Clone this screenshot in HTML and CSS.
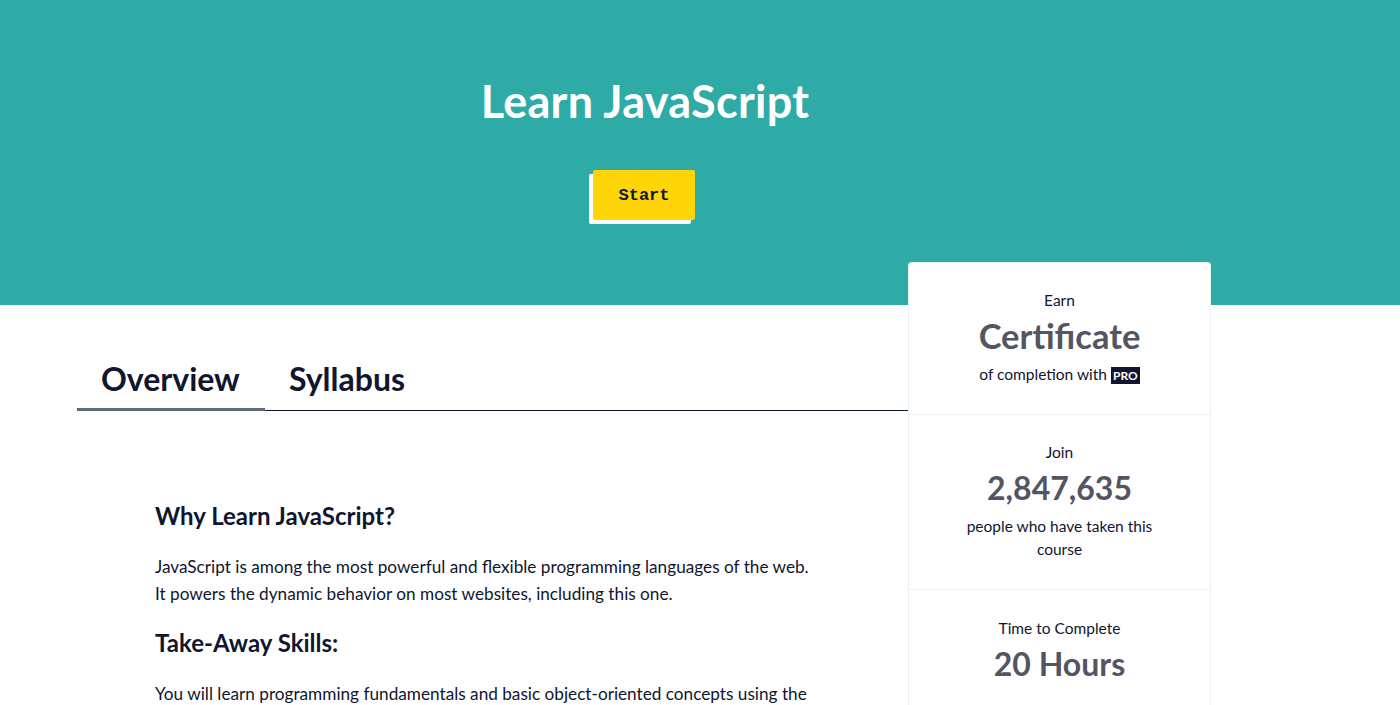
FILE: index.html
```html
<!DOCTYPE html>
<html>
<head>
<meta charset="utf-8">
<link rel="stylesheet" href="styles.css">
</head>
<body>
<header class="hero">
  <h1 class="hero-title">Learn JavaScript</h1>
  <button class="start-btn">Start</button>
</header>
<div class="page">
  <main class="main">
    <nav class="tabs">
      <div class="tab active">Overview</div>
      <div class="tab">Syllabus</div>
    </nav>
    <section class="content">
      <h2 class="h-why">Why Learn JavaScript?</h2>
      <p>JavaScript is among the most powerful and flexible programming languages of the web. It powers the dynamic behavior on most websites, including this one.</p>
      <h2 class="h-skills">Take-Away Skills:</h2>
      <p>You will learn programming fundamentals and basic object-oriented concepts using the latest JavaScript syntax.</p>
    </section>
  </main>
  <aside class="card">
    <div class="card-sec sec1">
      <div class="small">Earn</div>
      <div class="big cert">Certificate</div>
      <div class="small">of completion with <span class="pro">PRO</span></div>
    </div>
    <div class="card-sec sec2">
      <div class="small">Join</div>
      <div class="big">2,847,635</div>
      <div class="small narrow">people who have taken this course</div>
    </div>
    <div class="card-sec sec3">
      <div class="small">Time to Complete</div>
      <div class="big">20 Hours</div>
    </div>
  </aside>
</div>
</body>
</html>
```
FILE: styles.css
```css
* { box-sizing: border-box; }
html, body { margin: 0; padding: 0; }
body {
  font-family: "Lato", "Liberation Sans", sans-serif;
  color: #10162f;
  background: #fff;
  overflow: hidden;
  height: 705px;
}
.hero {
  background: #2eaba6;
  height: 305px;
  display: flex;
  flex-direction: column;
  align-items: center;
  padding-top: 74px;
  padding-right: 110px;
}
.hero-title {
  margin: 0;
  color: #fff;
  font-size: 45px;
  font-weight: 700;
  line-height: 54px;
  letter-spacing: 0.3px;
}
.start-btn {
  margin-top: 42px;
  margin-left: -2px;
  width: 102px;
  height: 50px;
  background: #fdd508;
  border: none;
  border-radius: 2px;
  box-shadow: -4px 4px 0 #fff;
  font-family: "Liberation Mono", monospace;
  font-weight: 700;
  font-size: 17px;
  color: #10162f;
}
.page {
  display: flex;
  padding-left: 77px;
}
.main {
  width: 831px;
  flex: none;
}
.tabs {
  display: flex;
  border-bottom: 1px solid #10162f;
  margin-top: 50px;
  height: 56px;
}
.tab {
  font-size: 32px;
  font-weight: 700;
  line-height: 48px;
  padding: 0 24px;
}
.tab.active {
  border-bottom: 3px solid #5c6b75;
  margin-bottom: -1px;
  width: 188px;
}
.content {
  padding: 90px 0 0 78px;
  width: 750px;
}
.content h2 {
  margin: 0;
  font-weight: 700;
  font-size: 24px;
  line-height: 30px;
}
.content p {
  font-size: 17.2px;
  line-height: 27px;
  margin: 22px 0 21px;
  max-width: 660px;
}
.card {
  width: 303px;
  flex: none;
  margin-top: -43px;
  height: 460px;
  background: #fff;
  border: 1px solid #e9f1f1;
  border-bottom: none;
  border-radius: 4px 4px 0 0;
  text-align: center;
  align-self: flex-start;
}
.card-sec {
  border-bottom: 1px solid #e9f1f1;
  display: flex;
  flex-direction: column;
  align-items: center;
}
.sec1 { padding-top: 26px; height: 152px; }
.sec2 { padding-top: 26px; height: 175px; }
.sec3 { padding-top: 27px; border-bottom: none; }
.small {
  font-size: 15.5px;
  line-height: 23px;
}
.narrow { width: 200px; }
.big {
  font-size: 32px;
  font-weight: 700;
  color: #535662;
  line-height: 44px;
  margin: 2px 0 5px;
}
.big.cert { font-size: 34.5px; }
.pro {
  background: #10162f;
  color: #fff;
  font-weight: 700;
  font-size: 12px;
  padding: 1px 2px;
}
```
